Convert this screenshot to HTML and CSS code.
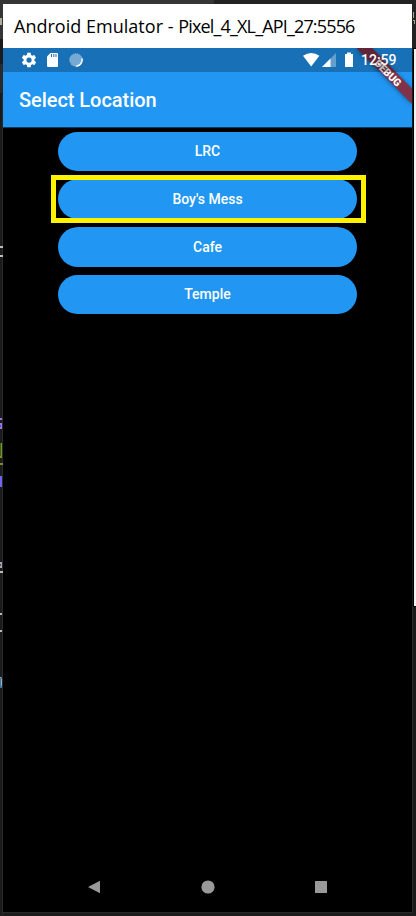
FILE: index.html
```html
<!DOCTYPE html>
<html lang="en">
<head>
<meta charset="utf-8">
<title>Android Emulator</title>
<link rel="stylesheet" href="styles.css">
</head>
<body>
<svg class="backdrop" width="416" height="916" aria-hidden="true">
  <path fill="#1b1b1b" d="M0 0h416v916H0z"/>
  <path fill="#353535" d="M0 0h214v4H0zM0 4h3v35H0z"/>
  <path fill="#222" d="M214 0h202v50H214z"/>
  <path fill="#292929" d="M0 64h3v29H0z"/>
  <path fill="#aab09b" d="M0 18h2v7H0z"/>
  <path fill="#a9a38f" d="M413 12h1v6h-1zM413 20h2v1h-2zM414 21h1v3h-1z"/>
  <path fill="#000" d="M413 48h3v559h-3z"/>
  <path fill="#f1f1f1" d="M414 49h2v557h-2z"/>
  <path fill="#292929" d="M2 95h1v820H2zM412 607h1v306h-1zM3 912h410v1H3z"/>
  <path fill="#bbb" d="M0 246h3v2H0zM0 255h3v2H0zM0 571h3v2H0zM0 613h2v2H0zM0 630h2v2H0z"/>
  <path fill="#9c78dc" d="M0 418h2v2H0zM0 423h2v6H0z"/>
  <path fill="#4d46e8" d="M0 425h1v2H0z"/>
  <path fill="#2c6a2c" d="M0 443h2v14H0z"/>
  <path fill="#858a25" d="M1 443h1v15H1zM0 456h2v2H0zM0 463h3v2H0z"/>
  <path fill="#7164ef" d="M0 476h2v11H0z"/>
  <path fill="#aaa" d="M0 562h2v6H0z"/>
  <path fill="#275a96" d="M0 564h1v2H0z"/>
  <path fill="#3778b4" d="M0 677h2v11H0z"/>
  <path fill="#b2a798" d="M0 677h1v1H0zM1 679h1v7H1z"/>
</svg>
<main class="window">
  <header class="titlebar"><span class="product">Android Emulator -&nbsp;</span><span class="device">Pixel_4_XL_API_27:5556</span></header>
  <section class="screen">
    <svg class="ribbon" width="64" height="64" viewBox="0 0 64 64">
      <defs><filter id="shade" x="-30%" y="-30%" width="160%" height="160%"><feGaussianBlur stdDeviation="2.5"/></filter></defs>
      <path d="M8 0h14l42 42v14z" fill="#000" opacity=".5" filter="url(#shade)"/>
      <path d="M8.500 0H24l40 40.500v15.500z" fill="#80324a"/>
      <text class="ribbon-text" transform="translate(40 25) rotate(45)" text-anchor="middle" y="3.700" textLength="33" lengthAdjust="spacingAndGlyphs">DEBUG</text>
    </svg>
    <div class="status">
      <svg width="60" height="24" viewBox="0 0 60 24" class="status-left">
        <g transform="translate(-.6 3.400) scale(.72)"><path fill="#fff" d="M19.400 13c.1-.7.100-1.300 0-2l2.100-1.700c.2-.1.200-.4.100-.6l-2-3.400c-.1-.3-.4-.3-.6-.3l-2.500 1c-.5-.4-1.100-.7-1.700-1l-.4-2.600c0-.3-.2-.4-.5-.4h-4c-.2 0-.4.1-.5.400L9 5c-.6.300-1.200.6-1.700 1l-2.500-1c-.2-.1-.5 0-.6.200l-2 3.500c-.1.200-.1.500.1.600L4.500 11c-.1.700-.1 1.300 0 2l-2.200 1.700c-.2.100-.2.400-.1.600l2 3.400c.1.300.4.300.6.300l2.500-1c.5.400 1.100.7 1.700 1l.4 2.600c.1.300.3.400.5.400h4c.3 0 .5-.1.500-.4l.4-2.600c.6-.3 1.200-.6 1.700-1l2.500 1c.2.100.5 0 .6-.2l2-3.500c.1-.2.100-.5-.1-.6zM12 15.600a3.600 3.600 0 1 1 0-7.200 3.600 3.600 0 0 1 0 7.200z"/></g>
        <path fill="#fff" d="M29.500 5H36q1 0 1 1v12q0 1-1 1H27q-1 0-1-1V8.500z"/>
        <path stroke="#1b70b6" d="M30.500 6v3M32.800 6v3M35 6v3"/>
        <circle cx="55" cy="12" r="6.300" fill="#76a9d3"/>
        <circle cx="55" cy="12" r="6.300" fill="none" stroke="#9bc1df" stroke-dasharray="1 1"/>
        <path d="M61.300 10.500A6.500 6.500 0 0 1 55.500 18.300" transform="translate(-.3 0)" fill="none" stroke="#fff" stroke-width="1.500"/>
      </svg>
      <svg width="52" height="24" viewBox="0 0 52 24" class="status-right">
        <path fill="#fff" d="M0 7.800Q8.200 2 16.400 7.800L8.200 18.600z"/>
        <path fill="#659fce" d="M33 5v14H19z"/>
        <path fill="#fff" d="M27.500 10.500V19H19z"/>
        <path fill="#fff" d="M42 6h2V4.500h4V6h2v13h-8z"/>
      </svg>
      <span class="clock">12:59</span>
    </div>
    <div class="appbar">Select Location</div>
    <div class="locations">
      <button>LRC</button>
      <div class="picked"><button>Boy's Mess</button></div>
      <button>Cafe</button>
      <button>Temple</button>
    </div>
    <nav class="navbar">
      <svg width="14" height="14" viewBox="0 0 14 14"><path fill="#999" d="M13 .8v12.400L1 7z"/></svg>
      <svg width="14" height="14" viewBox="0 0 14 14"><circle cx="7" cy="7" r="6.600" fill="#999"/></svg>
      <svg width="14" height="14" viewBox="0 0 14 14"><rect x="1" y="1" width="12" height="12" rx=".5" fill="#999"/></svg>
    </nav>
  </section>
</main>
</body>
</html>
```
FILE: styles.css
```css
*, *::before, *::after { box-sizing: border-box; }
body { margin: 0; width: 416px; height: 916px; overflow: hidden; background: #1b1b1b; padding: 4px 4px 4px 3px; font-family: Roboto, sans-serif; }
.backdrop { position: absolute; left: 0; top: 0; }
.window { position: relative; width: 409px; height: 908px; background: #000; display: flex; flex-direction: column; }
.titlebar { height: 44px; background: #fff; color: #000; padding-left: 11px; display: flex; align-items: center; font: 18px/24px "Open Sans", sans-serif; white-space: nowrap; }
.product { letter-spacing: .02px; }
.device { letter-spacing: -.84px; }
.screen { position: relative; flex: 1; display: flex; flex-direction: column; overflow: hidden; background: #000; }
.status { position: relative; z-index: 2; height: 24px; background: rgba(0, 0, 0, .25); display: flex; align-items: center; color: #fff; }
.screen::before { content: ""; position: absolute; inset: 0 0 auto; height: 24px; background: #2196f3; }
.status-left { margin-left: 18px; width: 60px; overflow: visible; }
.status-right { margin-left: auto; }
.clock { width: 51px; margin-left: 6px; font-size: 14px; font-weight: 500; line-height: 24px; }
.ribbon { position: absolute; right: 0; top: 0; z-index: 1; }
.ribbon-text { font: 900 10.500px Roboto, sans-serif; fill: #fff; }
.appbar { height: 56px; padding: 0 16px; background: #2196f3; border-bottom: 1px solid #103c60; color: #fff; font-size: 20px; font-weight: 500; line-height: 56px; letter-spacing: -.05px; }
.locations { flex: 1; display: flex; flex-direction: column; align-items: center; gap: 8px; padding-top: 3.500px; }
.locations button { width: 298.500px; height: 39.800px; padding: 0; border: 0; border-radius: 20px; background: #2196f3; color: #fff; font: 500 14px Roboto, sans-serif; letter-spacing: 0; }
.locations > :nth-child(n+3) { position: relative; top: -.4px; }
.picked { position: relative; display: flex; }
.picked::after { content: ""; position: absolute; left: -7.250px; top: -4.300px; width: 315px; height: 48px; border: 5px solid #fff200; }
.navbar { height: 50px; display: flex; justify-content: center; gap: 99.500px; align-items: center; }
```
